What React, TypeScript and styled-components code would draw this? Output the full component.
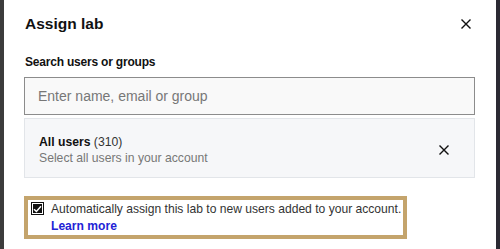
import styled, { createGlobalStyle } from "styled-components";

const GlobalStyle = createGlobalStyle`
  html, body {
    margin: 0;
    padding: 0;
    background: #2f2f33;
  }
  * {
    box-sizing: border-box;
  }
`;

const CloseIcon = ({ size = 10 }: { size?: number }) => (
  <svg width={size} height={size} viewBox="0 0 10 10">
    <path d="M1 1L9 9M9 1L1 9" stroke="#111" strokeWidth="1.4" strokeLinecap="square" />
  </svg>
);

export default function App() {
  return (
    <>
      <GlobalStyle />
      <Backdrop>
        <Dialog>
          <Header>
            <Title>Assign lab</Title>
            <IconButton aria-label="Close">
              <CloseIcon />
            </IconButton>
          </Header>
          <FieldLabel>Search users or groups</FieldLabel>
          <SearchInput placeholder="Enter name, email or group" />
          <OptionCard>
            <OptionText>
              <OptionTitle>
                <strong>All users</strong> (310)
              </OptionTitle>
              <OptionHint>Select all users in your account</OptionHint>
            </OptionText>
            <IconButton aria-label="Remove">
              <CloseIcon />
            </IconButton>
          </OptionCard>
          <Highlight>
            <Checkbox>
              <svg width="9" height="8" viewBox="0 0 9 8">
                <path d="M1 4.2L3.4 6.5L8 1.2" stroke="#fff" strokeWidth="1.5" fill="none" />
              </svg>
            </Checkbox>
            <CheckText>
              <span>Automatically assign this lab to new users added to your account.</span>
              <LearnMore href="#">Learn more</LearnMore>
            </CheckText>
          </Highlight>
        </Dialog>
      </Backdrop>
    </>
  );
}

const Backdrop = styled.div`
  display: flex;
  height: 249px;
  padding: 0 4px;
  background: linear-gradient(to right, #3c3c3c 0, #3c3c3c 4px, #2b2a33 4px);
`;

const Dialog = styled.div`
  flex: 1;
  background: #ffffff;
  padding: 12px 21px 0 20px;
  display: flex;
  flex-direction: column;
  font-family: "Liberation Sans", Arial, sans-serif;
  color: #1a1a1a;
  & > * {
    flex-shrink: 0;
  }
`;

const Header = styled.div`
  display: flex;
  align-items: center;
  justify-content: space-between;
  height: 24px;
  padding-left: 1px;
`;

const Title = styled.h2`
  margin: 0;
  font-size: 15.5px;
  font-weight: 700;
  color: #111;
`;

const IconButton = styled.button`
  display: flex;
  align-items: center;
  justify-content: center;
  width: 20px;
  height: 20px;
  padding: 0;
  margin-right: -1px;
  border: none;
  background: none;
  cursor: pointer;
`;

const FieldLabel = styled.label`
  margin-top: 18px;
  padding-left: 1px;
  font-size: 12px;
  font-weight: 700;
  letter-spacing: -0.2px;
  line-height: 16px;
  color: #111;
`;

const SearchInput = styled.input`
  margin-top: 7px;
  height: 38px;
  width: 100%;
  padding: 0 13px;
  border: 1px solid #8c8c8c;
  border-radius: 0;
  background: #f9f9f9;
  font-family: inherit;
  font-size: 14px;
  color: #222;
  outline: none;
  &::placeholder {
    color: #777;
  }
`;

const OptionCard = styled.div`
  margin-top: 3px;
  height: 60px;
  display: flex;
  align-items: center;
  justify-content: space-between;
  padding: 4px 21px 0 14px;
  background: #f6f7f9;
  border: 1px solid #e2e5e9;
`;

const OptionText = styled.div`
  display: flex;
  flex-direction: column;
`;

const OptionTitle = styled.div`
  font-size: 12.2px;
  line-height: 16px;
  color: #333;
  strong {
    font-weight: 700;
    color: #111;
  }
`;

const OptionHint = styled.div`
  font-size: 12.2px;
  line-height: 16px;
  color: #777;
`;

const Highlight = styled.div`
  margin-top: 18px;
  width: 383px;
  display: flex;
  align-items: flex-start;
  gap: 7px;
  padding: 1px 6px 0 3px;
  border: 4px solid #c4a46c;
`;

const Checkbox = styled.span`
  flex: none;
  margin-top: 1px;
  width: 13px;
  height: 13px;
  display: flex;
  align-items: center;
  justify-content: center;
  background: #111;
  outline: 1px solid #fff;
  outline-offset: -2px;
`;

const CheckText = styled.div`
  display: flex;
  flex-direction: column;
  align-items: flex-start;
  font-size: 12.1px;
  line-height: 17px;
  color: #333;
  white-space: nowrap;
`;

const LearnMore = styled.a`
  font-weight: 700;
  color: #2323d6;
  text-decoration: none;
`;
